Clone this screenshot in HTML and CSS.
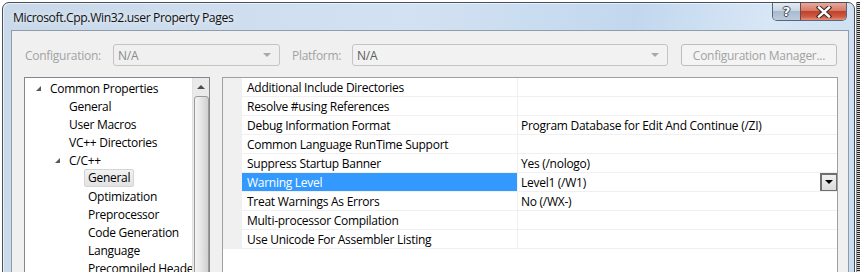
FILE: index.html
```html
<!DOCTYPE html>
<html lang="en">
<head>
    <meta charset="UTF-8">
    <title>Microsoft.Cpp.Win32.user Property Pages</title>
    <link rel="stylesheet" href="styles.css">
</head>
<body>
    <div class="screen">
        <div class="window">
            <div class="titlebar">
                <span class="title">Microsoft.Cpp.Win32.user Property Pages</span>
                <div class="caption-buttons">
                    <div class="cap-btn help"><span>?</span></div>
                    <div class="cap-btn close">
                        <svg width="16" height="12" viewBox="0 0 16 12">
                            <path d="M3 1.5 L13 10.5 M13 1.5 L3 10.5" stroke="#3a2a28" stroke-width="4.5" stroke-linecap="square"></path>
                            <path d="M3 1.5 L13 10.5 M13 1.5 L3 10.5" stroke="#fff" stroke-width="2.4" stroke-linecap="square"></path>
                        </svg>
                    </div>
                </div>
            </div>

            <div class="client">
                <div class="toolbar">
                    <label class="tb-label config-label">Configuration:</label>
                    <div class="combo config-combo"><span class="combo-text">N/A</span><span class="combo-arrow"></span></div>
                    <label class="tb-label platform-label">Platform:</label>
                    <div class="combo platform-combo"><span class="combo-text dark">N/A</span><span class="combo-arrow"></span></div>
                    <div class="config-btn">Configuration Manager...</div>
                </div>

                <div class="panes">
                    <div class="tree">
                        <ul class="tree-list">
                            <li class="tree-item lvl1"><span class="expander"></span>Common Properties</li>
                            <li class="tree-item lvl2">General</li>
                            <li class="tree-item lvl2">User Macros</li>
                            <li class="tree-item lvl2">VC++ Directories</li>
                            <li class="tree-item lvl2"><span class="expander"></span>C/C++</li>
                            <li class="tree-item lvl3"><span class="selected">General</span></li>
                            <li class="tree-item lvl3">Optimization</li>
                            <li class="tree-item lvl3">Preprocessor</li>
                            <li class="tree-item lvl3">Code Generation</li>
                            <li class="tree-item lvl3">Language</li>
                            <li class="tree-item lvl3">Precompiled Headers</li>
                        </ul>
                        <div class="vscroll">
                            <div class="scroll-up"></div>
                            <div class="scroll-thumb"></div>
                        </div>
                    </div>

                    <div class="grid">
                        <div class="rows">
                            <div class="row"><div class="name">Additional Include Directories</div><div class="value"></div></div>
                            <div class="row"><div class="name">Resolve #using References</div><div class="value"></div></div>
                            <div class="row"><div class="name">Debug Information Format</div><div class="value">Program Database for Edit And Continue (/ZI)</div></div>
                            <div class="row"><div class="name">Common Language RunTime Support</div><div class="value"></div></div>
                            <div class="row"><div class="name">Suppress Startup Banner</div><div class="value">Yes (/nologo)</div></div>
                            <div class="row active"><div class="name">Warning Level</div><div class="value">Level1 (/W1)<span class="drop-btn"></span></div></div>
                            <div class="row"><div class="name">Treat Warnings As Errors</div><div class="value">No (/WX-)</div></div>
                            <div class="row"><div class="name">Multi-processor Compilation</div><div class="value"></div></div>
                            <div class="row"><div class="name">Use Unicode For Assembler Listing</div><div class="value"></div></div>
                        </div>
                    </div>
                </div>
            </div>
        </div>
        <div class="edge"></div>
    </div>
</body>
</html>
```

FILE: styles.css
```css
:root {
    --client-bg: #f0f0f0;
    --frame-dark: #474f5a;
    --disabled: #a2a2a2;
    --line: #f0f0f0;
    --select: #3399ff;
}

* {
    margin: 0;
    padding: 0;
    box-sizing: border-box;
}

body {
    width: 863px;
    height: 272px;
    overflow: hidden;
    background: #fff;
    font-family: 'Open Sans', 'Noto Sans', sans-serif;
    font-size: 12px;
    letter-spacing: -0.27px;
    color: #000;
}

.screen {
    display: flex;
    padding: 2px 0 0 2px;
}

.window {
    width: 853px;
    height: 320px;
    border: 1px solid var(--frame-dark);
    border-radius: 7px 7px 0 0;
    background: linear-gradient(100deg, #c9d9ea 0%, #d3e2f2 45%, #c2d7ee 70%, #d8e7f6 85%, #c9dcf0 100%);
    padding: 0 5px 0 8px;
    display: flex;
    flex-direction: column;
    box-shadow: inset 1px 1px 0 rgba(255,255,255,0.6);
}

.edge {
    width: 4px;
    margin-left: 1px;
    height: 300px;
    background: repeating-linear-gradient(to bottom, #222 0 1px, #d8d8d8 1px 2px);
    border-left: 1px solid #8a8a8a;
}

.titlebar {
    height: 27px;
    display: flex;
    align-items: flex-start;
}

.title {
    font-size: 12.2px;
    letter-spacing: -0.4px;
    margin: 6px 0 0 2px;
    color: #111;
    text-shadow: 0 0 6px rgba(255,255,255,0.9);
}

.caption-buttons {
    margin-left: auto;
    margin-right: 2px;
    display: flex;
    height: 18px;
    border: 1px solid #5a6678;
    border-top: none;
    border-radius: 0 0 5px 5px;
    overflow: hidden;
}

.cap-btn {
    height: 100%;
    display: flex;
    align-items: center;
    justify-content: center;
}

.help {
    width: 28px;
    background: linear-gradient(#e3ebf3 0%, #c8d5e3 45%, #a9bbcf 50%, #bccbdb 100%);
    border-right: 1px solid #6b4a48;
}

.help span {
    font-family: 'DejaVu Sans', sans-serif;
    font-weight: bold;
    font-size: 13px;
    color: #fff;
    text-shadow: 1px 0 0 #3d4654, -1px 0 0 #3d4654, 0 1px 0 #3d4654, 0 -1px 0 #3d4654;
}

.close {
    width: 45px;
    background: linear-gradient(#e9a89a 0%, #d57a66 45%, #c2412a 50%, #cf5b43 80%, #e39078 100%);
}

.client {
    flex: 1;
    background: var(--client-bg);
    border: 1px solid #8e9cac;
    padding: 13px 10px 0 12px;
}

.toolbar {
    display: flex;
    align-items: center;
    height: 22px;
}

.tb-label {
    color: var(--disabled);
}

.config-label {
    width: 89px;
    padding-left: 1px;
}

.platform-label {
    width: 72px;
    padding-left: 12px;
}

.combo {
    height: 22px;
    border: 1px solid #c4c4c4;
    border-radius: 3px;
    display: flex;
    align-items: center;
    padding: 0 8px 0 4px;
    background: #f0f0f0;
}

.config-combo {
    width: 167px;
}

.platform-combo {
    width: 316px;
    background: #f2f2f2;
}

.combo-text {
    color: #8a8a8a;
}

.combo-text.dark {
    color: #5c5c5c;
}

.combo-arrow {
    margin-left: auto;
    width: 0;
    height: 0;
    border-left: 4px solid transparent;
    border-right: 4px solid transparent;
    border-top: 4px solid #a8a8a8;
}

.config-btn {
    margin-left: 13px;
    width: 156px;
    height: 22px;
    border: 1px solid #bdbdbd;
    border-radius: 3px;
    background: #f4f4f4;
    color: var(--disabled);
    display: flex;
    align-items: center;
    justify-content: center;
}

.panes {
    display: flex;
    gap: 12px;
    margin-top: 11px;
    height: 220px;
}

.tree {
    width: 186px;
    background: #fff;
    border: 1px solid #828790;
    display: flex;
}

.tree-list {
    list-style: none;
    flex: 1;
    min-width: 0;
    overflow: hidden;
    padding-top: 1px;
}

.tree-item {
    height: 18px;
    display: flex;
    align-items: center;
    white-space: nowrap;
}

.lvl1 { padding-left: 11px; }
.lvl2 { padding-left: 44px; }
.lvl3 { padding-left: 63px; }

.lvl2 .expander { margin-left: -14px; }

.expander {
    flex: none;
    width: 0;
    height: 0;
    border-left: 5px solid transparent;
    border-bottom: 5px solid #595959;
    margin-right: 9px;
    margin-top: 1px;
}

.selected {
    display: inline-block;
    height: 18px;
    line-height: 16px;
    padding: 0 3px;
    margin-left: -4px;
    border: 1px solid #d4d4d4;
    border-radius: 2px;
    background: linear-gradient(#f2f2f2, #e2e2e2);
}

.vscroll {
    flex: none;
    width: 17px;
    background: #eaeaea;
    border-left: 1px solid #e2e2e2;
    display: flex;
    flex-direction: column;
    align-items: center;
}

.scroll-up {
    margin-top: 7px;
    width: 0;
    height: 0;
    border-left: 4px solid transparent;
    border-right: 4px solid transparent;
    border-bottom: 4px solid #4d4d4d;
}

.scroll-thumb {
    margin-top: 7px;
    width: 15px;
    height: 200px;
    border: 1px solid #9a9a9a;
    border-radius: 3px;
    background: linear-gradient(to right, #f4f4f4, #e4e4e4 50%, #d0d0d0);
}

.grid {
    width: 616px;
    background: #fff;
    border: 1px solid #a0a0a0;
    border-bottom: none;
}

.rows {
    padding-left: 19px;
    background: var(--client-bg);
}

.row {
    display: grid;
    grid-template-columns: 276px 1fr;
    height: 19px;
    background: #fff;
}

.name,
.value {
    display: flex;
    align-items: center;
    border-bottom: 1px solid var(--line);
    white-space: nowrap;
    overflow: hidden;
}

.name {
    padding-left: 5px;
    border-right: 1px solid var(--line);
}

.value {
    padding-left: 3px;
}

.row.active .name {
    background: var(--select);
    color: #fff;
}

.drop-btn {
    margin-left: auto;
    margin-right: 0;
    width: 17px;
    height: 19px;
    border: 1px solid #6f6f6f;
    border-width: 2px 1px 2px 2px;
    background: linear-gradient(#f1f1f1, #dcdcdc);
    display: flex;
    align-items: center;
    justify-content: center;
}

.drop-btn::after {
    content: "";
    width: 0;
    height: 0;
    border-left: 4px solid transparent;
    border-right: 4px solid transparent;
    border-top: 4px solid #000;
}
```
